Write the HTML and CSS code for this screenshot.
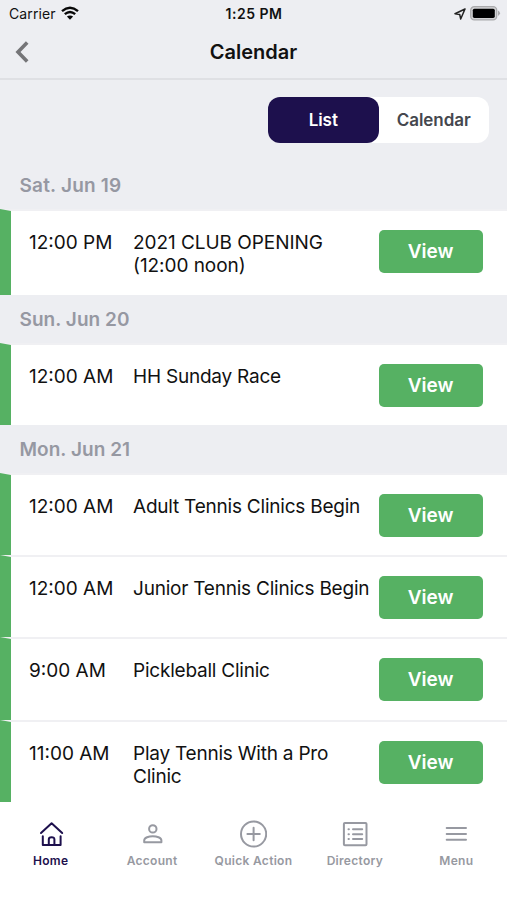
FILE: index.html
```html
<!DOCTYPE html>
<html lang="en">
<head>
<meta charset="utf-8">
<title>Calendar</title>
<link rel="stylesheet" href="styles.css">
</head>
<body>
<div class="app">
  <div class="status">
    <div class="carrier"><span>Carrier</span>
      <svg width="18" height="14" viewBox="0 0 18 14" fill="none" stroke="#080808" stroke-width="2.4"><path d="M1 5.2Q9-1.6 17 5.2M3.8 8.2Q9 3.8 14.2 8.2"/><path d="M9 13.7 5.9 10.6Q9 8.2 12.1 10.6Z" fill="#080808" stroke="none"/></svg>
    </div>
    <div class="clock">1:25 PM</div>
    <div class="power">
      <svg width="12" height="12" viewBox="0 0 12 12" fill="none" stroke="#222" stroke-width="1.5" stroke-linejoin="round"><path d="M11 1 1 5.8 5.7 6.4 6.7 11Z"/></svg>
      <svg width="31" height="15" viewBox="0 0 31 15"><rect x=".7" y=".7" width="26" height="13.2" rx="3.6" fill="#d2d2d4" stroke="#aaaaac" stroke-width="1.3"/><rect x="2.8" y="2.7" width="22" height="9.2" rx="1.6" fill="#000"/><path d="M28 4.6Q32 7.3 28 10Z" fill="#aaaaac"/></svg>
    </div>
  </div>
  <header class="nav">
    <svg class="back" width="14" height="22" viewBox="0 0 14 22" fill="none" stroke="#757578" stroke-width="3.6"><path d="M12.2 1.6 3 11l9.2 9.4"/></svg>
    <h1>Calendar</h1>
  </header>
  <div class="toolbar"><div class="segments"><div class="segment active">List</div><div class="segment">Calendar</div></div></div>
  <main>
    <h2>Sat. Jun 19</h2>
    <div class="event"><time>12:00 PM</time><p>2021 CLUB OPENING<br>(12:00 noon)</p><button>View</button></div>
    <h2>Sun. Jun 20</h2>
    <div class="event"><time>12:00 AM</time><p>HH Sunday Race</p><button>View</button></div>
    <h2>Mon. Jun 21</h2>
    <div class="event"><time>12:00 AM</time><p>Adult Tennis Clinics Begin</p><button>View</button></div>
    <div class="event"><time>12:00 AM</time><p>Junior Tennis Clinics Begin</p><button>View</button></div>
    <div class="event"><time>9:00 AM</time><p>Pickleball Clinic</p><button>View</button></div>
    <div class="event"><time>11:00 AM</time><p>Play Tennis With a Pro<br>Clinic</p><button>View</button></div>
  </main>
  <footer class="tabs">
    <div class="tab current"><svg width="28" height="28" viewBox="0 0 28 28"><path d="M4 13 14.6 3.2 25.2 13M5.8 16.2V25h17.8v-8.8M11.8 24.8v-5.4q0-2.2 2.8-2.2t2.8 2.2v5.4"/></svg><span>Home</span></div>
    <div class="tab"><svg width="28" height="28" viewBox="0 0 28 28"><circle cx="14.8" cy="8.9" r="3.7"/><path d="M6.2 22.3v-1.8c0-3 4.8-4.3 8.6-4.3s8.6 1.3 8.6 4.3v1.8Z"/></svg><span>Account</span></div>
    <div class="tab"><svg width="28" height="28" viewBox="0 0 28 28"><circle cx="14.6" cy="14" r="12.6"/><path d="M14.6 7.8v12.4M8.4 14h12.4"/></svg><span>Quick Action</span></div>
    <div class="tab"><svg width="28" height="28" viewBox="0 0 28 28"><rect x="2.9" y="3" width="22.6" height="22.3" rx="1"/><path d="M12 9.3h9.2M12 14.2h9.2M12 19.1h9.2M7.5 9.3h.4M7.5 14.2h.4M7.5 19.1h.4"/></svg><span>Directory</span></div>
    <div class="tab"><svg width="28" height="28" viewBox="0 0 28 28"><path d="M4.7 8.1h19.3M4.7 14h19.3M4.7 19.7h19.3"/></svg><span>Menu</span></div>
  </footer>
</div>
</body>
</html>
```

FILE: styles.css
```css
* { box-sizing: border-box; }
body { margin: 0; font-family: Inter, "Liberation Sans", sans-serif; color: #111; background: #fff; }
h1, h2, p { margin: 0; }
svg { display: block; }
.app { width: 507px; height: 900px; overflow: hidden; background: #edeef2; display: flex; flex-direction: column; }
.status { height: 28px; display: grid; grid-template-columns: 1fr auto 1fr; align-items: center; padding: 0 6px 0 9px; font-size: 14px; line-height: 28px; }
.carrier { display: flex; align-items: center; gap: 5.5px; letter-spacing: .1px; }
.carrier svg { margin-top: -2px; }
.clock { font-weight: 600; font-size: 14px; letter-spacing: .5px; margin-left: -2px; }
.power { display: flex; justify-content: flex-end; align-items: center; gap: 4px; margin-top: -1px; }
.nav { height: 52px; border-bottom: 2px solid #dfe0e4; display: grid; grid-template-columns: 1fr auto 1fr; align-items: center; padding: 0 15px 2px; }
.nav h1 { font-size: 20px; font-weight: 600; line-height: 24px; grid-column: 2; }
.toolbar { height: 80px; padding: 17px 18px 0 0; display: flex; justify-content: flex-end; align-items: flex-start; }
.segments { display: flex; width: 221px; height: 46px; background: #fff; border-radius: 12px; }
.segment { width: 50%; text-align: center; line-height: 46px; font-size: 17px; font-weight: 600; color: #45474e; border-radius: 12px; letter-spacing: -.05px; }
.segment.active { background: #1d104d; color: #fff; }
main { height: 642px; background: #fff; }
h2 { height: 48px; padding-left: 19.5px; line-height: 49px; font-size: 19px; font-weight: 600; letter-spacing: .05px; color: #9698a2; background: #edeef2; }
h2:first-child { height: 49px; line-height: 51px; letter-spacing: .2px; }
.event { height: 82px; display: grid; grid-template-columns: 104px 1fr 104px; align-items: start; padding: 19px 24.5px 0 18px; border-left: 11px solid #56b163; border-top: 2px solid #f0f0f3; font-size: 19px; line-height: 23px; background: #fff; }
h2:first-child + .event { height: 86px; }
.event + .event { height: 82.3px; }
.event time, .event p { white-space: nowrap; padding-top: 1px; }
.event p { letter-spacing: -.22px; }
h2:first-child + .event p { letter-spacing: -.05px; }
button { height: 43px; border: 0; border-radius: 5px; background: #56b163; color: #fff; font: 600 19px/43px Inter, sans-serif; padding: 0; }
.tabs { flex: 1; background: #fff; display: grid; grid-template-columns: repeat(5, 1fr); padding-top: 18px; }
.tab { display: flex; flex-direction: column; align-items: center; color: #9799a1; font-size: 12px; font-weight: 600; line-height: 16px; gap: 5px; white-space: nowrap; letter-spacing: .3px; }
.tab svg { fill: none; stroke: currentColor; stroke-width: 2; stroke-linecap: round; stroke-linejoin: round; }
.current { color: #1d104d; }
```
